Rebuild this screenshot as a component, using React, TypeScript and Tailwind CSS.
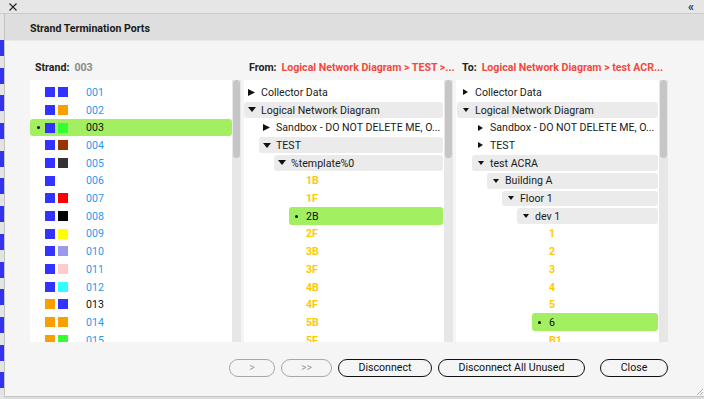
import React from 'react';

const BLUE = '#3333ff';
const ORANGE = '#f9a000';

type Strand = { id: string; a: string; b?: string; dark?: boolean };

const strands: Strand[] = [
  { id: '001', a: BLUE, b: BLUE },
  { id: '002', a: BLUE, b: ORANGE },
  { id: '003', a: BLUE, b: '#33ff33', dark: true },
  { id: '004', a: BLUE, b: '#993300' },
  { id: '005', a: BLUE, b: '#333333' },
  { id: '006', a: BLUE },
  { id: '007', a: BLUE, b: '#ff0000' },
  { id: '008', a: BLUE, b: '#000000' },
  { id: '009', a: BLUE, b: '#ffff00' },
  { id: '010', a: BLUE, b: '#9999ee' },
  { id: '011', a: BLUE, b: '#ffcccc' },
  { id: '012', a: BLUE, b: '#33ffff' },
  { id: '013', a: ORANGE, b: BLUE, dark: true },
  { id: '014', a: ORANGE, b: ORANGE },
  { id: '015', a: ORANGE, b: '#33ff33' },
];

// kind: 'open' | 'closed' | 'leaf'
type Node = { label: string; depth: number; kind: 'open' | 'closed' | 'leaf'; selected?: boolean };

const fromTree: Node[] = [
  { label: 'Collector Data', depth: 0, kind: 'closed' },
  { label: 'Logical Network Diagram', depth: 0, kind: 'open' },
  { label: 'Sandbox - DO NOT DELETE ME, O...', depth: 1, kind: 'closed' },
  { label: 'TEST', depth: 1, kind: 'open' },
  { label: '%template%0', depth: 2, kind: 'open' },
  { label: '1B', depth: 3, kind: 'leaf' },
  { label: '1F', depth: 3, kind: 'leaf' },
  { label: '2B', depth: 3, kind: 'leaf', selected: true },
  { label: '2F', depth: 3, kind: 'leaf' },
  { label: '3B', depth: 3, kind: 'leaf' },
  { label: '3F', depth: 3, kind: 'leaf' },
  { label: '4B', depth: 3, kind: 'leaf' },
  { label: '4F', depth: 3, kind: 'leaf' },
  { label: '5B', depth: 3, kind: 'leaf' },
  { label: '5F', depth: 3, kind: 'leaf' },
];

const toTree: Node[] = [
  { label: 'Collector Data', depth: 0, kind: 'closed' },
  { label: 'Logical Network Diagram', depth: 0, kind: 'open' },
  { label: 'Sandbox - DO NOT DELETE ME, O...', depth: 1, kind: 'closed' },
  { label: 'TEST', depth: 1, kind: 'closed' },
  { label: 'test ACRA', depth: 1, kind: 'open' },
  { label: 'Building A', depth: 2, kind: 'open' },
  { label: 'Floor 1', depth: 3, kind: 'open' },
  { label: 'dev 1', depth: 4, kind: 'open' },
  { label: '1', depth: 5, kind: 'leaf' },
  { label: '2', depth: 5, kind: 'leaf' },
  { label: '3', depth: 5, kind: 'leaf' },
  { label: '4', depth: 5, kind: 'leaf' },
  { label: '5', depth: 5, kind: 'leaf' },
  { label: '6', depth: 5, kind: 'leaf', selected: true },
  { label: 'B1', depth: 5, kind: 'leaf' },
];

function Triangle({ open, small }: { open: boolean; small?: boolean }) {
  if (open) {
    return small ? (
      <svg width="6" height="4" viewBox="0 0 6 4"><path d="M0 0h6L3 4z" fill="#111" /></svg>
    ) : (
      <svg width="8" height="5" viewBox="0 0 8 5"><path d="M0 0h8L4 5z" fill="#111" /></svg>
    );
  }
  return small ? (
    <svg width="5" height="6" viewBox="0 0 5 6"><path d="M0 0l5 3-5 3z" fill="#111" /></svg>
  ) : (
    <svg width="7" height="7" viewBox="0 0 7 7"><path d="M0 0l7 3.5L0 7z" fill="#111" /></svg>
  );
}

function Scrollbar() {
  return (
    <div className="w-[9px] shrink-0 bg-[#e7e7e7] flex flex-col">
      <div className="h-[78px] mx-[1px] rounded-full bg-[#c6c6c6]" />
    </div>
  );
}

function Bullet() {
  return <div className="w-[3px] h-[3px] rounded-full bg-[#111]" />;
}

function StrandList() {
  return (
    <div className="w-[211px] h-full flex bg-white">
      <div className="flex-1 pt-[3.4px] overflow-hidden">
        {strands.map((s) => {
          const sel = s.id === '003';
          return (
            <div key={s.id} className="h-[17.7px] flex">
              <div className={`flex-1 flex items-center rounded-[3px] ${sel ? 'bg-[#a3ef62]' : ''}`}>
                <div className="w-[15px] pl-[7px] flex items-center">{sel && <Bullet />}</div>
                <div className="w-[10px] h-[10px]" style={{ background: s.a }} />
                <div className="w-[10px] h-[10px] ml-[3px]" style={{ background: s.b ?? 'transparent' }} />
                <span className={`ml-[18px] pt-[2px] ${s.dark ? 'text-[#111]' : 'text-[#2b98f2]'}`}>{s.id}</span>
              </div>
            </div>
          );
        })}
      </div>
      <Scrollbar />
    </div>
  );
}

function Tree({ nodes, width, off, small }: { nodes: Node[]; width: string; off: number; small?: boolean }) {
  return (
    <div className={`${width} h-full flex bg-white`}>
      <div className="flex-1 pt-[3.4px] overflow-hidden">
        {nodes.map((n, i) => {
          const ml = n.depth * 15 + off;
          if (n.kind === 'leaf') {
            return (
              <div key={i} className="h-[17.7px] flex pr-[1px]" style={{ paddingLeft: ml }}>
                <div className={`flex-1 flex items-center rounded-[3px] ${n.selected ? 'bg-[#a3ef62]' : ''}`}>
                  <div className="w-[17px] pl-[6px] flex items-center">{n.selected && <Bullet />}</div>
                  <span className={`pt-[2px] ${n.selected ? 'text-[#111]' : 'text-[#ffc800] font-bold'}`}>{n.label}</span>
                </div>
              </div>
            );
          }
          return (
            <div key={i} className="h-[17.7px] flex py-[1px] pr-[1px]" style={{ paddingLeft: ml }}>
              <div className={`flex-1 flex items-center rounded-[3px] ${n.kind === 'open' ? 'bg-[#ebebeb]' : ''}`}>
                <div className={`${small ? 'w-[18px] pl-[6px]' : 'w-[17px] pl-[4px]'} flex items-center`}>
                  <Triangle open={n.kind === 'open'} small={small} />
                </div>
                <span className="pt-[2px] text-[#1a1a1a] whitespace-nowrap">{n.label}</span>
              </div>
            </div>
          );
        })}
      </div>
      <Scrollbar />
    </div>
  );
}

function Btn({ label, w, disabled }: { label: string; w: string; disabled?: boolean }) {
  return (
    <div
      className={`${w} h-[18px] flex items-center justify-center rounded-full border ${
        disabled ? 'border-[#a8a8a8] text-[#9a9a9a]' : 'border-[#111] text-[#111]'
      }`}
    >
      {label}
    </div>
  );
}

export default function App() {
  return (
    <div
      className="w-[704px] h-[399px] overflow-hidden flex flex-col bg-[#dcdcdc] text-[10.6px] leading-none text-[#1a1a1a]"
      style={{ fontFamily: 'Roboto, "Liberation Sans", sans-serif' }}
    >
      {/* window strip */}
      <div className="h-[14px] shrink-0 flex items-center justify-between border-b border-[#cbcbcb] bg-[#e6e6e6] pl-[9px] pr-[10px]">
        <svg width="8" height="8" viewBox="0 0 8 8">
          <path d="M0.5 0.5l7 7M7.5 0.5l-7 7" stroke="#222" strokeWidth="1.1" />
        </svg>
        <span className="text-[12px] font-bold text-[#333]">«</span>
      </div>

      <div className="flex flex-1 min-h-0">
        {/* page behind the dialog */}
        <div className="w-[4px] shrink-0 flex flex-col gap-[11.7px] pt-[26px] bg-[#e4e4e4]">
          {Array.from({ length: 13 }).map((_, i) => (
            <div key={i} className="h-[16px] shrink-0 bg-[#3333ee]" />
          ))}
        </div>

        <div className="flex-1 flex flex-col mb-[2px] border-l border-b border-[#c4c4c4] bg-[#f5f5f5]">
          <div className="h-[27px] shrink-0 flex items-center pl-[25px] pt-[5px] bg-[#dedede] border-b border-[#e9e9e9]">
            <span className="font-bold text-[#1a1a1a]">Strand Termination Ports</span>
          </div>

          <div className="flex flex-col pl-[25px] pt-[19px]">
            <div className="h-[14px] flex items-center font-bold pt-[2px]">
              <div className="w-[211px] pl-[5px] flex gap-[5px]">
                <span className="text-[#222]">Strand:</span>
                <span className="text-[#8a8a8a]">003</span>
              </div>
              <div className="w-[209px] ml-[3px] pl-[5px] flex gap-[5px] whitespace-nowrap">
                <span className="text-[#222]">From:</span>
                <span className="text-[#f04a3e]">Logical Network Diagram &gt; TEST &gt;...</span>
              </div>
              <div className="w-[212px] ml-[3px] pl-[6px] flex gap-[5px] whitespace-nowrap">
                <span className="text-[#222]">To:</span>
                <span className="text-[#f04a3e]">Logical Network Diagram &gt; test ACR...</span>
              </div>
            </div>

            <div className="h-[262px] mt-[6px] flex gap-[3px]">
              <StrandList />
              <Tree nodes={fromTree} width="w-[209px]" off={0} />
              <Tree nodes={toTree} width="w-[212px]" off={1} small />
            </div>

            <div className="mt-[17px] w-[638px] flex justify-end gap-[6px]">
              <Btn label=">" w="w-[46px]" disabled />
              <Btn label=">>" w="w-[51px]" disabled />
              <Btn label="Disconnect" w="w-[94px]" />
              <Btn label="Disconnect All Unused" w="w-[147px]" />
              <div className="ml-[9px]">
                <Btn label="Close" w="w-[68px]" />
              </div>
            </div>
          </div>

          <div className="flex-1 flex items-end justify-end pr-[1px] pb-[1px]">
            <svg width="6" height="6" viewBox="0 0 6 6">
              <path d="M0 6L6 0M3 6L6 3" stroke="#9a9a9a" strokeWidth="0.8" />
            </svg>
          </div>
        </div>
      </div>
    </div>
  );
}
